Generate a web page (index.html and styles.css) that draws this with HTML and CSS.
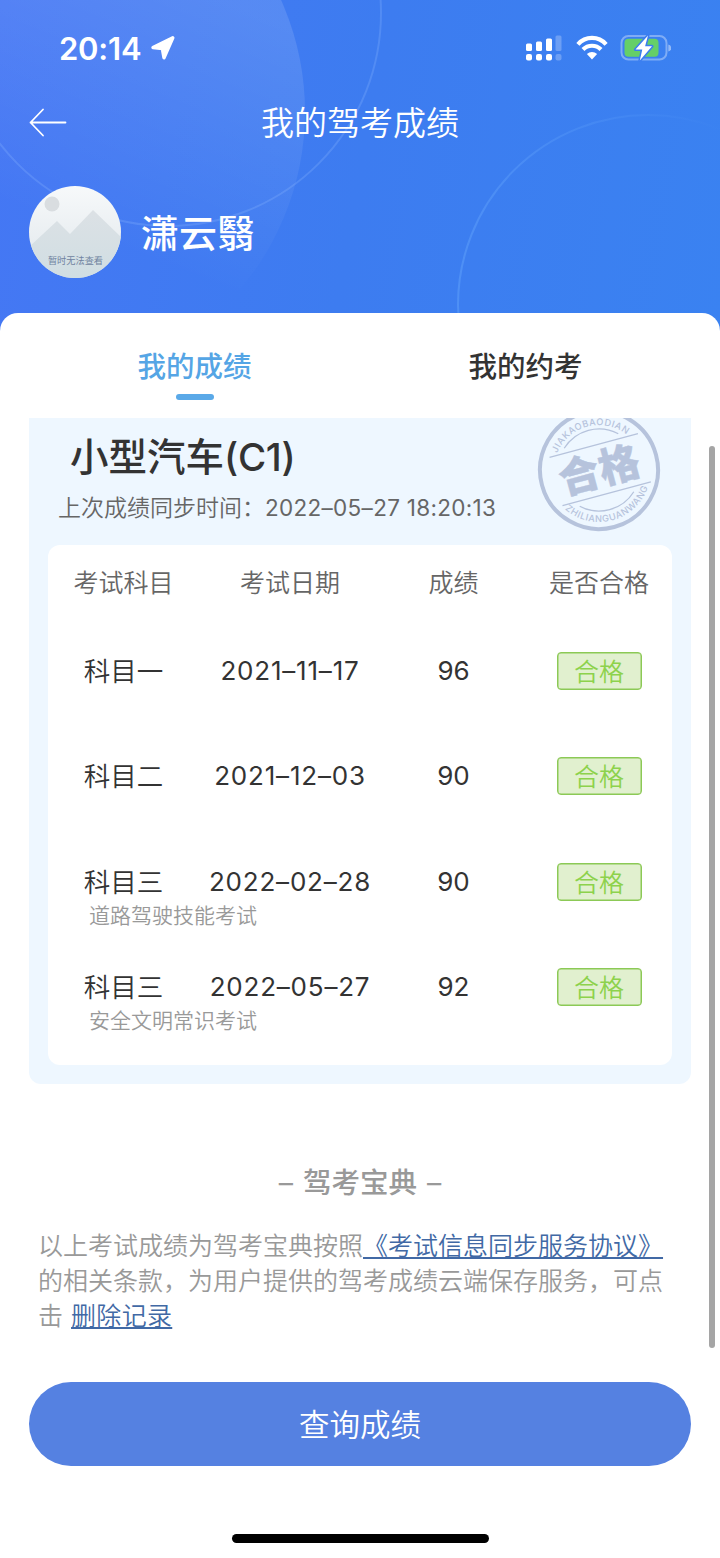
FILE: index.html
```html
<!DOCTYPE html>
<html lang="zh-CN">
<head>
<meta charset="utf-8">
<title>我的驾考成绩</title>
<link rel="stylesheet" href="styles.css">
</head>
<body>
<div class="screen">
  <header class="hero">
    <svg class="hero-art" width="720" height="340" viewBox="0 0 720 340" aria-hidden="true">
      <defs>
        <linearGradient id="disc" gradientUnits="userSpaceOnUse" x1="170" y1="270" x2="270" y2="20">
          <stop offset="0" stop-color="#fff" stop-opacity="0"/>
          <stop offset="1" stop-color="#fff" stop-opacity="0.12"/>
        </linearGradient>
        <linearGradient id="ring" x1="0" y1="0" x2="1" y2="0">
          <stop offset="0" stop-color="#6fb0ff" stop-opacity="0.36"/>
          <stop offset="0.7" stop-color="#6fb0ff" stop-opacity="0"/>
        </linearGradient>
      </defs>
      <circle cx="31" cy="112" r="274" fill="url(#disc)"/>
      <circle cx="168" cy="13" r="213" fill="none" stroke="#8fb8ff" stroke-opacity="0.26" stroke-width="2"/>
      <circle cx="648" cy="305" r="190" fill="none" stroke="url(#ring)" stroke-width="2"/>
    </svg>
    <div class="status">
      <div class="status-left">
        <span class="clock">20:14</span>
        <svg width="26" height="26" viewBox="0 0 26 26"><path d="M22.800 2.800 3 12.500l9.300 1L14 22.800z" fill="#fff" stroke="#fff" stroke-width="3.400" stroke-linejoin="round"/></svg>
      </div>
      <div class="status-right">
        <svg class="signal" width="37" height="26" viewBox="0 0 37 26" fill="#fff">
          <rect x="0" y="8.500" width="6" height="7.500" rx="1.500"/><rect x="10" y="6.500" width="6" height="9.500" rx="1.500"/><rect x="20" y="3.500" width="6" height="12.500" rx="1.500"/><rect x="29.500" y="0.500" width="6" height="15.500" rx="1.500" opacity="0.250"/>
          <rect x="0" y="19" width="6" height="6.500" rx="2"/><rect x="10" y="19" width="6" height="6.500" rx="2"/><rect x="20" y="19" width="6" height="6.500" rx="2"/><rect x="29.500" y="19" width="6" height="6.500" rx="2" opacity="0.250"/>
        </svg>
        <svg width="32" height="26" viewBox="0 0 32 26" fill="none" stroke="#fff" stroke-width="4.200">
          <path d="M1.900 9.300C9.500 0.800 22.500 0.800 30.100 9.300"/>
          <path d="M7 14.500c5-5 13-5 18 0"/>
          <path d="M16 24.500 10.900 19c3-2.700 7.200-2.700 10.200 0z" fill="#fff" stroke="none"/>
        </svg>
        <svg width="51" height="28" viewBox="0 0 51 28">
          <rect x="1.500" y="2" width="45" height="23.500" rx="7" fill="none" stroke="#fff" stroke-opacity="0.350" stroke-width="2"/>
          <rect x="4.500" y="4.800" width="34" height="18" rx="4" fill="#65cf68"/>
          <path d="M48.300 10.500q3 1 3 3.500t-3 3.500z" fill="#fff" opacity="0.450"/>
          <path d="M28 1.500 15.500 15.600h6.800L19.800 26.500 32 12.300h-6.900z" fill="#fff" stroke="#3b7df0" stroke-width="3" stroke-linejoin="round" paint-order="stroke"/>
        </svg>
      </div>
    </div>
    <nav class="nav">
      <svg class="back" width="38" height="30" viewBox="0 0 38 30" fill="none" stroke="#fff" stroke-width="1.800" stroke-linecap="round" stroke-linejoin="round"><path d="M14 1.500 1.500 14.500l12.500 13M1.500 14.500H36.500"/></svg>
      <h1 class="nav-title">我的驾考成绩</h1>
    </nav>
    <div class="user">
      <svg class="avatar" width="92" height="92" viewBox="0 0 92 92">
        <defs>
          <linearGradient id="sky" x1="0" y1="0" x2="0" y2="1"><stop offset="0" stop-color="#f7f9fa"/><stop offset="1" stop-color="#dfe6eb"/></linearGradient>
          <linearGradient id="hill" x1="0" y1="0" x2="0" y2="1"><stop offset="0" stop-color="#dce1e5"/><stop offset="1" stop-color="#d0dee3"/></linearGradient>
          <clipPath id="round"><circle cx="46" cy="46" r="46"/></clipPath>
        </defs>
        <g clip-path="url(#round)">
          <rect width="92" height="92" fill="url(#sky)"/>
          <circle cx="23" cy="18" r="7.500" fill="#d9dde0"/>
          <path d="M0 61 28 35 41 48 64 24 92 51V92H0z" fill="url(#hill)"/>
        </g>
        <text class="avatar-text" x="46.500" y="77.500" text-anchor="middle">暂时无法查看</text>
      </svg>
      <span class="user-name">潇云翳</span>
    </div>
  </header>

  <main class="panel">
    <div class="tabs">
      <div class="tab tab-active">我的成绩</div>
      <div class="tab">我的约考</div>
    </div>

    <section class="card">
      <svg class="stamp" width="130" height="130" viewBox="-65 -65 130 130">
        <defs>
          <path id="arc-top" d="M-45 0A45 45 0 0 1 45 0"/>
          <path id="arc-bottom" d="M-52 0A52 52 0 0 0 52 0"/>
        </defs>
        <g transform="rotate(-15)" fill="none" stroke="#b6c3dc">
          <circle r="59" stroke-width="4"/>
          <path d="M-44.500 -25H47M-44.500 25H47" stroke-width="1.300"/>
          <path d="M-28 -30A41 41 0 0 1 28 -30M-28 30A41 41 0 0 0 28 30" stroke-width="1.300"/>
        </g>
        <g transform="rotate(-15)" fill="#b6c3dc">
          <text class="stamp-small" text-anchor="middle"><textPath href="#arc-top" startOffset="50%">JIAKAOBAODIAN</textPath></text>
          <text class="stamp-small" text-anchor="middle"><textPath href="#arc-bottom" startOffset="50%">ZHILIANGUANWANG</textPath></text>
          <text class="stamp-big" x="0" y="15" text-anchor="middle">合格</text>
        </g>
      </svg>
      <h2 class="card-title">小型汽车<span class="card-class">(C1)</span></h2>
      <p class="card-sync">上次成绩同步时间：<span class="sync-time">2022–05–27 18:20:13</span></p>

      <div class="table">
        <div class="row head"><span>考试科目</span><span>考试日期</span><span>成绩</span><span>是否合格</span></div>
        <div class="row"><span>科目一</span><span class="num date">2021–11–17</span><span class="num">96</span><span class="badge">合格</span></div>
        <div class="row"><span>科目二</span><span class="num date">2021–12–03</span><span class="num">90</span><span class="badge">合格</span></div>
        <div class="row"><span>科目三</span><span class="num date">2022–02–28</span><span class="num">90</span><span class="badge">合格</span><span class="note">道路驾驶技能考试</span></div>
        <div class="row"><span>科目三</span><span class="num date">2022–05–27</span><span class="num">92</span><span class="badge">合格</span><span class="note">安全文明常识考试</span></div>
      </div>
    </section>

    <h3 class="brand"><span class="dash">–</span><span>驾考宝典</span><span class="dash">–</span></h3>
    <p class="terms">以上考试成绩为驾考宝典按照<a class="link">《考试信息同步服务协议》</a><br>的相关条款，为用户提供的驾考成绩云端保存服务，可点<br>击 <a class="link link-delete">删除记录</a></p>

    <button class="query">查询成绩</button>
    <div class="home-bar"></div>
    <div class="scrollbar"></div>
  </main>
</div>
</body>
</html>
```

FILE: styles.css
```css
* { box-sizing: border-box; margin: 0; padding: 0; }

body {
  width: 720px;
  height: 1558px;
  overflow: hidden;
  background: #fff;
  font-family: Inter, "Noto Sans CJK SC", sans-serif;
  font-weight: 350;
  color: #333;
}

.screen { position: relative; height: 1558px; display: flex; flex-direction: column; }

.hero {
  position: relative;
  height: 340px;
  flex: none;
  background: linear-gradient(100deg, #4577f4 0%, #3d7cf0 50%, #3a82f1 100%);
  color: #fff;
}
.hero-art { position: absolute; left: 0; top: 0; }

.status {
  position: relative;
  height: 96px;
  padding: 0 49px 0 59px;
  display: flex;
  align-items: center;
  justify-content: space-between;
}
.status-left { display: flex; align-items: center; gap: 9px; }
.status-right { display: flex; align-items: center; gap: 12.5px; }
.clock { font-size: 31px; font-weight: 600; line-height: 38px; padding-top: 1px; letter-spacing: -0.2px; }

.nav {
  position: relative;
  height: 52px;
  padding: 0 29px;
  display: grid;
  grid-template-columns: 60px 1fr 60px;
  align-items: center;
}
.nav-title { padding-top: 1px; text-align: center; font-size: 33px; line-height: 52px; font-weight: 350; }

.user {
  position: relative;
  margin-top: 38px;
  padding-left: 29px;
  display: flex;
  align-items: center;
  gap: 20px;
}
.avatar { flex: none; }
.avatar-text { font-size: 9.2px; font-weight: 400; fill: #7083a0; }
.user-name { font-size: 38px; line-height: 50px; padding-top: 2px; font-weight: 500; }

.panel {
  position: relative;
  flex: 1;
  margin-top: -27.5px;
  padding: 0 29px;
  background: #fff;
  border-radius: 18px 18px 0 0;
  display: flex;
  flex-direction: column;
}

.tabs { height: 105.5px; display: grid; grid-template-columns: 1fr 1fr; }
.tab {
  display: flex;
  flex-direction: column;
  align-items: center;
  padding-top: 33.5px;
  font-size: 28.5px;
  line-height: 42px;
  font-weight: 500;
}
.tab-active { color: #55a5e5; }
.tab-active::after { content: ""; width: 38px; height: 6px; margin-top: 6px; border-radius: 3px; background: #5aa9e8; }

.card {
  position: relative;
  height: 666px;
  padding: 14px 19px 19px;
  overflow: hidden;
  background: #eef7ff;
  border-radius: 0 0 12px 12px;
}
.stamp { position: absolute; left: 505px; top: -13px; }
.stamp-small { font-size: 9.2px; letter-spacing: 0.6px; font-weight: 500; }
.stamp-big { font-size: 41px; font-weight: 900; stroke: #b6c3dc; stroke-width: 0.4px; }
.card-title { padding-left: 22px; font-size: 38.5px; line-height: 50px; font-weight: 500; }
.card-class { font-weight: 450; letter-spacing: -0.3px; }
.card-sync { padding-left: 10px; margin-top: 10px; font-size: 23px; line-height: 32px; color: #666; }
.sync-time { font-size: 22.5px; font-weight: 400; letter-spacing: 0.3px; }

.table { height: 520px; margin-top: 21px; background: #fff; border-radius: 12px; }
.row {
  height: 105.5px;
  padding-top: 34px;
  display: grid;
  grid-template-columns: 151px 182px 145px 146px;
  grid-template-rows: 38px 30px;
  justify-items: center;
  align-items: center;
  font-size: 26.5px;
  line-height: 38px;
}
.head { height: 72.5px; padding-top: 19px; font-size: 25px; color: #666; }
.num { font-size: 26px; font-weight: 400; }
.date { letter-spacing: 0.8px; }
.badge {
  width: 85px;
  height: 38px;
  border: 1px solid #8cc956;
  box-shadow: inset 0 0 0 0.5px #8cc956;
  border-radius: 4px;
  background: #e1f0cf;
  color: #8dd24c;
  font-size: 25px;
  line-height: 38px;
  text-align: center;
}
.note {
  grid-column: 1 / 3;
  justify-self: start;
  padding-left: 41px;
  font-size: 21px;
  line-height: 30px;
  color: #999;
}

.brand {
  margin-top: 78px;
  display: flex;
  justify-content: center;
  gap: 10px;
  font-size: 28.5px;
  line-height: 42px;
  font-weight: 500;
  color: #999;
}
.dash { font-weight: 400; }
.terms {
  margin: 25px 0 0 9px;
  font-size: 25px;
  line-height: 35px;
  color: #999;
  white-space: nowrap;
}
.link { color: #4169a5; text-decoration: underline; text-decoration-thickness: 1.5px; text-underline-offset: 2px; }
.link-delete { margin-left: 1px; letter-spacing: 0.3px; }

.query {
  height: 84px;
  margin-top: 48px;
  padding-top: 1px;
  border: 0;
  border-radius: 42px;
  background: #5581e1;
  color: #fff;
  font: 350 30.5px/83px Inter, "Noto Sans CJK SC", sans-serif;
}
.home-bar { width: 257px; height: 9px; margin: 68px auto 0; border-radius: 5px; background: #000; }
.scrollbar { position: absolute; left: 709px; top: 133.5px; width: 6px; height: 902px; border-radius: 3px; background: #a5a5a5; }
```
